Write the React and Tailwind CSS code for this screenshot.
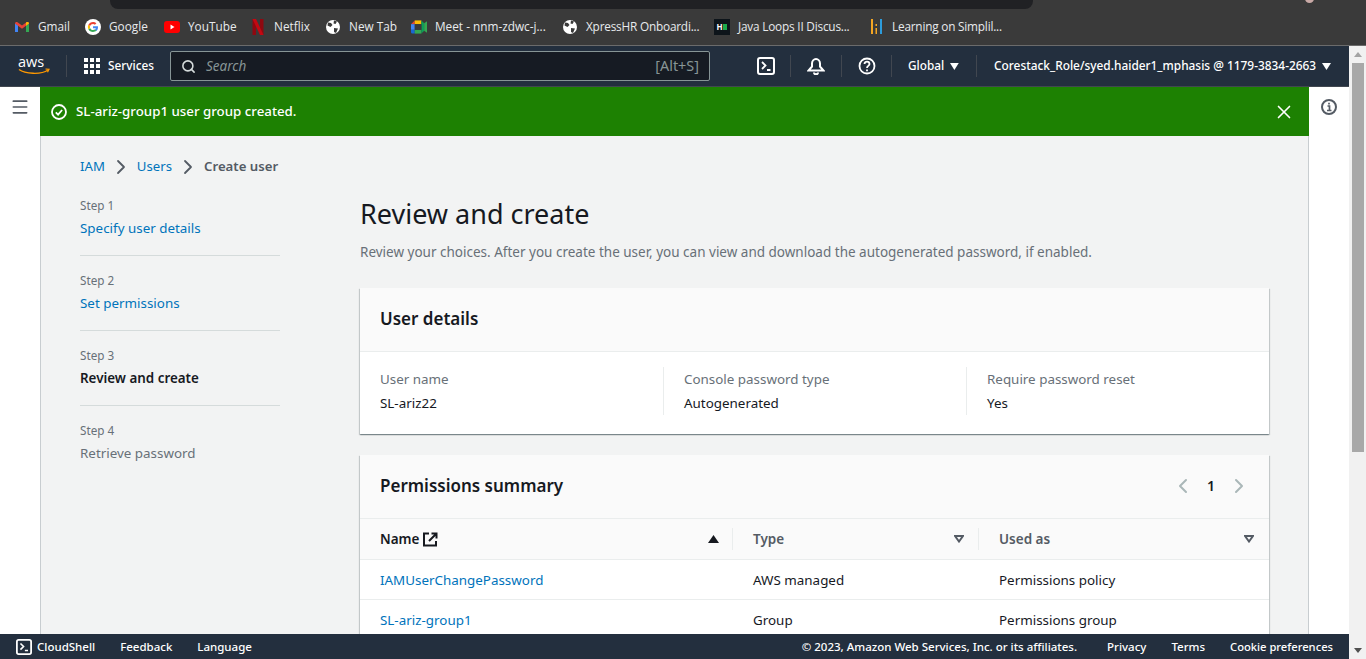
import React from "react";
import { X, Menu, Search, ChevronRight, ChevronLeft } from "lucide-react";

const font = "font-['Noto_Sans','Open_Sans',sans-serif]";

const GlobeIcon = () => (
  <svg width="16" height="16" viewBox="0 0 16 16">
    <circle cx="8" cy="8" r="7" fill="#fff" />
    <path d="M3 3.500l3 .5 1.500 2-2 2-3-1.500zM9 1.500l3 1-1.500 2.500-2-.5zM9 9l4 .5-2 4.500-2-1z" fill="#3a3a3a" />
  </svg>
);

const bookmarks = [
  {
    label: "Gmail",
    w: "w-[71px]",
    icon: (
      <svg width="16" height="16" viewBox="0 0 16 16">
        <path d="M1 13V4l3 2.200V13z" fill="#4285f4" />
        <path d="M12 13V6.200L15 4v9z" fill="#34a853" />
        <path d="M1 4.500C1 3 2.500 2.500 3.500 3.200L8 6.600l4.500-3.400c1-.7 2.500-.2 2.500 1.300L12 6.800 8 9.800 4 6.800z" fill="#ea4335" />
        <path d="M12 6.800l3-2.300C15 3 13.500 2.500 12.500 3.200L12 3.600z" fill="#fbbc04" />
      </svg>
    ),
  },
  {
    label: "Google",
    w: "w-[79px]",
    icon: (
      <svg width="16" height="16" viewBox="0 0 16 16">
        <circle cx="8" cy="8" r="8" fill="#fff" />
        <path d="M13 8.200c0-.4 0-.7-.1-1H8v2h2.800c-.1.7-.5 1.200-1 1.600l1.600 1.200C12.400 11.100 13 9.800 13 8.200z" fill="#4285f4" />
        <path d="M8 13c1.400 0 2.500-.5 3.400-1.200l-1.600-1.200c-.5.300-1 .5-1.800.5-1.300 0-2.500-.9-2.900-2.100L3.400 10.200C4.200 11.900 6 13 8 13z" fill="#34a853" />
        <path d="M5.100 9c-.2-.6-.2-1.400 0-2L3.400 5.800c-.7 1.400-.7 3 0 4.400z" fill="#fbbc04" />
        <path d="M8 4.900c.8 0 1.400.3 1.900.8l1.500-1.500C10.500 3.500 9.300 3 8 3 6 3 4.200 4.100 3.400 5.800L5.100 7C5.500 5.800 6.700 4.900 8 4.900z" fill="#ea4335" />
      </svg>
    ),
  },
  {
    label: "YouTube",
    w: "w-[86px]",
    icon: (
      <svg width="16" height="12" viewBox="0 0 16 12">
        <rect width="16" height="12" rx="3" fill="#f00" />
        <path d="M6.500 3.500v5l4-2.500z" fill="#fff" />
      </svg>
    ),
  },
  {
    label: "Netflix",
    w: "w-[75px]",
    icon: (
      <svg width="16" height="16" viewBox="0 0 16 16">
        <path d="M2.500 0h3.500v16l-3.500 0z" fill="#8f0810" />
        <path d="M10 0h3.500v16H10z" fill="#8f0810" />
        <path d="M2.500 0H6l7.500 16H10z" fill="#c40812" />
      </svg>
    ),
  },
  { label: "New Tab", w: "w-[86px]", icon: <GlobeIcon /> },
  {
    label: "Meet - nnm-zdwc-j...",
    w: "w-[152px]",
    icon: (
      <svg width="17" height="14" viewBox="0 0 17 14">
        <path d="M0 4l4-4v4z" fill="#ea4335" />
        <path d="M4 0h7v4H4z" fill="#fbbc04" />
        <path d="M0 4h4v6H0z" fill="#4285f4" />
        <path d="M0 10h4v4H1.500A1.500 1.500 0 0 1 0 12.500z" fill="#1967d2" />
        <path d="M4 10h7v4H4z" fill="#34a853" />
        <path d="M11 0v14l3-3V3z" fill="#0f9d58" />
        <path d="M14 3l3-2v12l-3-2z" fill="#34a853" />
        <path d="M4 4h7v6H4z" fill="#3a3a3a" />
      </svg>
    ),
  },
  { label: "XpressHR Onboardi...", w: "w-[152px]", cls: "-ml-px tracking-[-0.2px]", icon: <GlobeIcon /> },
  {
    label: "Java Loops II Discus...",
    w: "w-[154px]",
    cls: "tracking-[-0.2px]",
    icon: (
      <span className="flex h-4 w-4 items-center justify-center gap-px bg-[#0d141a]">
        <span className="text-[8px] leading-none font-bold text-white">H</span>
        <span className="h-[6px] w-[4px] bg-[#1ba94c]"></span>
      </span>
    ),
  },
  {
    label: "Learning on Simplil...",
    w: "",
    cls: "tracking-[-0.2px]",
    icon: (
      <svg width="11" height="16" viewBox="0 0 11 16">
        <rect x="0" y="0" width="2" height="15" fill="#f5a623" />
        <rect x="4.500" y="5" width="1.500" height="2" fill="#f5a623" />
        <rect x="4.500" y="9" width="1.500" height="6" fill="#f5a623" />
        <rect x="9" y="0" width="2" height="15" fill="#2d9cdb" />
      </svg>
    ),
  },
];

const TerminalIcon = ({ size = 18 }) => (
  <svg width={size} height={size} viewBox="0 0 18 18" fill="none" stroke="#fff" strokeWidth="2">
    <rect x="1" y="1" width="16" height="16" rx="2" />
    <path d="M5 5l3.500 3.500L5 12M10 13h3.500" strokeWidth="1.800" />
  </svg>
);

const Divider = () => <span className="block h-[22px] w-px bg-[#414750]"></span>;

const Caret = () => (
  <svg width="9" height="7" viewBox="0 0 9 7" className="ml-[6px]">
    <path d="M0 0h9L4.500 7z" fill="#fff" />
  </svg>
);

const FilterCaret = () => (
  <svg width="10" height="8" viewBox="0 0 10 8" fill="none" stroke="#545b64" strokeWidth="2">
    <path d="M1 1h8L5 6.500z" />
  </svg>
);

const TopNav = () => (
  <div className="flex h-[40px] shrink-0 items-center bg-[#232f3e] text-[11.800px] whitespace-nowrap text-white">
    <svg width="36" height="32" viewBox="0 0 36 32" className="ml-[18px] mr-[12px]">
      <text x="0" y="17" fill="#fff" fontSize="14.500" fontFamily="Open Sans, sans-serif">aws</text>
      <path d="M1 19.500c6 4.500 22 5.500 29 .5" fill="none" stroke="#f90" strokeWidth="1.400" />
      <path d="M27.500 19l3.500.3-1.500 3" fill="none" stroke="#f90" strokeWidth="1.200" />
    </svg>
    <Divider />
    <span className="ml-[17px] grid h-4 w-4 grid-cols-3 gap-[2px]">
      {[...Array(9)].map((_, i) => (
        <span key={i} className="bg-white"></span>
      ))}
    </span>
    <span className="ml-2 w-[54px] font-medium">Services</span>
    <div className="ml-[8px] flex h-[30px] w-[540px] shrink-0 items-center rounded-[2px] border border-[#879596] bg-[#161b23] pl-[10px] pr-[10px]">
      <Search size={15} strokeWidth={2.500} className="text-[#d5dbdb]" />
      <span className="ml-[10px] flex-1 text-[13.500px] italic text-[#879596]">Search</span>
      <span className="text-[14.400px] text-[#879596]">[Alt+S]</span>
    </div>
    <span className="ml-[47px]"><TerminalIcon /></span>
    <span className="ml-[15px] mr-[16px]"><Divider /></span>
    <svg width="18" height="18" viewBox="0 0 18 18" fill="none" stroke="#fff" strokeWidth="2">
      <path d="M1.500 13.500h15L13 9.500V6.500a4 4.500 0 0 0-8 0v3z" />
      <path d="M7 15.500a2 1.800 0 0 0 4 0" />
    </svg>
    <span className="mx-[16px]"><Divider /></span>
    <svg width="18" height="18" viewBox="0 0 18 18" fill="none" stroke="#fff" strokeWidth="1.800">
      <circle cx="9" cy="9" r="7.500" />
      <path d="M6.500 7c0-3.300 5-3.300 5 0 0 2-2.500 1.800-2.500 4" />
      <path d="M9 12.500v1.800" />
    </svg>
    <span className="ml-[15px] mr-[16px]"><Divider /></span>
    <span className="flex w-[51px] items-center font-medium">Global<Caret /></span>
    <span className="ml-[17px] mr-[17px]"><Divider /></span>
    <span className="flex items-center text-[11.880px] font-medium">
      Corestack_Role/syed.haider1_mphasis @ 1179-3834-2663<Caret />
    </span>
  </div>
);

const steps = [
  { step: "Step 1", label: "Specify user details", cls: "font-normal text-[#0073bb]" },
  { step: "Step 2", label: "Set permissions", cls: "font-normal text-[#0073bb]" },
  { step: "Step 3", label: "Review and create", cls: "font-semibold text-[#16191f]" },
  { step: "Step 4", label: "Retrieve password", cls: "font-normal text-[#687078]" },
];

const Stepper = () => (
  <div className="w-[200px] shrink-0 pt-[20px]">
    {steps.map((s, i) => (
      <div
        key={s.step}
        className={`${i === 0 ? "h-[60px]" : "h-[75px] pt-[15px]"} ${i < 3 ? "border-b border-[#d5dbdb]" : ""}`}
      >
        <div className="text-[11.700px] leading-[18px] text-[#687078]">{s.step}</div>
        <div className={`mt-[2px] text-[13.400px] leading-[24px] ${s.cls}`}>{s.label}</div>
      </div>
    ))}
  </div>
);

const Field = ({ label, value, cls }) => (
  <div className={cls}>
    <div className="text-[13.400px] leading-[24px] text-[#687078]">{label}</div>
    <div className="text-[13.400px] leading-[24px] text-[#16191f]">{value}</div>
  </div>
);

const Card = ({ children, cls = "" }) => (
  <div className={`bg-white shadow-[0_1px_1px_0_rgba(0,28,36,0.3),1px_1px_1px_0_rgba(0,28,36,0.15),-1px_1px_1px_0_rgba(0,28,36,0.15)] ${cls}`}>
    {children}
  </div>
);

const UserDetails = () => (
  <Card>
    <div className="flex h-[64px] items-center border-b border-[#eaeded] bg-[#fafafa] pb-[2px] pl-[20px] text-[17px] font-semibold text-[#16191f]">
      User details
    </div>
    <div className="flex h-[82px] pt-[15px]">
      <Field label="User name" value="SL-ariz22" cls="h-[48px] w-[304px] border-r border-[#eaeded] pl-[20px]" />
      <Field label="Console password type" value="Autogenerated" cls="h-[48px] w-[303px] border-r border-[#eaeded] pl-[20px]" />
      <Field label="Require password reset" value="Yes" cls="pl-[20px]" />
    </div>
  </Card>
);

const Header = ({ children, cls }) => (
  <div className={`flex h-[40px] items-center text-[13.500px] font-semibold ${cls}`}>{children}</div>
);

const rows = [
  { name: "IAMUserChangePassword", type: "AWS managed", used: "Permissions policy" },
  { name: "SL-ariz-group1", type: "Group", used: "Permissions group" },
];

const PermissionsSummary = () => (
  <Card cls="mt-[21px]">
    <div className="flex h-[63px] items-center justify-between bg-[#fafafa] pb-[2px] pl-[20px] pr-[18px]">
      <span className="text-[17px] font-semibold text-[#16191f]">Permissions summary</span>
      <div className="flex items-center text-[#aab7b8]">
        <ChevronLeft size={24} strokeWidth={2} />
        <span className="mx-[12px] text-[14px] font-semibold text-[#16191f]">1</span>
        <ChevronRight size={24} strokeWidth={2} />
      </div>
    </div>
    <div className="flex border-y border-[#eaeded] bg-[#fafafa]">
      <Header cls="w-[372px] justify-between pl-[20px] pr-[13px] text-[#16191f]">
        <span className="flex items-center gap-[4px]">
          Name
          <svg width="15" height="15" viewBox="0 0 15 15" fill="none" stroke="#16191f" strokeWidth="2">
            <path d="M6 1.500H1v12h12V9" />
            <path d="M6 9l7-7M8.500 1.500h5v5" />
          </svg>
        </span>
        <svg width="11" height="8" viewBox="0 0 11 8"><path d="M0 8h11L5.500 0z" fill="#16191f" /></svg>
      </Header>
      <div className="my-[9px] w-px bg-[#eaeded]"></div>
      <Header cls="w-[245px] justify-between pl-[20px] pr-[14px] text-[#545b64]">
        Type <FilterCaret />
      </Header>
      <div className="my-[9px] w-px bg-[#eaeded]"></div>
      <Header cls="flex-1 justify-between pl-[20px] pr-[15px] text-[#545b64]">
        Used as <FilterCaret />
      </Header>
    </div>
    {rows.map((r) => (
      <div key={r.name} className="flex h-[40px] items-center border-b border-[#eaeded] pt-[2px] text-[13.400px] text-[#16191f]">
        <span className="w-[393px] pl-[20px] text-[#0073bb]">{r.name}</span>
        <span className="w-[246px]">{r.type}</span>
        <span>{r.used}</span>
      </div>
    ))}
  </Card>
);

const Footer = () => (
  <div className="flex h-[25px] shrink-0 items-center justify-between bg-[#232f3e] pl-[16px] pr-[16px] text-[11.500px] font-medium text-white">
    <div className="flex items-center">
      <TerminalIcon size={16} />
      <span className="ml-[5px]">CloudShell</span>
      <span className="ml-[25px]">Feedback</span>
      <span className="ml-[25px]">Language</span>
    </div>
    <div className="flex items-baseline">
      <span>© 2023, Amazon Web Services, Inc. or its affiliates.</span>
      <span className="ml-[30px]">Privacy</span>
      <span className="ml-[25px]">Terms</span>
      <span className="ml-[25px] text-[11.200px]">Cookie preferences</span>
    </div>
  </div>
);

export default function App() {
  return (
    <div className={`${font} flex h-[659px] flex-col overflow-hidden bg-white`}>
      {/* browser chrome */}
      <div className="relative flex h-[46px] shrink-0 flex-col overflow-hidden border-b border-[#6b6b6b] bg-[#3a3a3a]">
        <div className="ml-[110px] h-[9px] w-[923px] rounded-b-[8px] bg-[#202124]"></div>
        <span className="absolute top-[-6px] left-[1305px] h-[9px] w-[9px] rounded-full bg-[#c9a9a6]"></span>
        <div className="flex items-center pl-[14px] pt-[9px] font-['Open_Sans',sans-serif] text-[11.800px] text-[#e8eaed]">
          {bookmarks.map((b) => (
            <div key={b.label} className={`flex h-[18px] shrink-0 items-center gap-[8px] ${b.w} ${b.cls || ""}`}>
              <span className="flex w-[16px] justify-center">{b.icon}</span>
              <span>{b.label}</span>
            </div>
          ))}
        </div>
      </div>

      <div className="flex min-h-0 flex-1">
        <div className="flex min-w-0 flex-1 flex-col">
          <TopNav />
          <div className="flex min-h-0 flex-1 border-t border-[#414750]">
            <div className="w-[40px] shrink-0 pl-[10px] pt-[10px]">
              <Menu size={20} strokeWidth={2} className="text-[#545b64]" />
            </div>
            <div className="flex min-w-0 flex-1 flex-col border-x border-[#c8cdd0] bg-[#f2f3f3]">
              <div className="-ml-px -mr-px flex h-[49px] shrink-0 items-center bg-[#1d8102] pl-[11px] pr-[14px] text-[13.300px] font-medium text-white">
                <svg width="16" height="16" viewBox="0 0 16 16" fill="none" stroke="#fff" strokeWidth="1.800">
                  <circle cx="8" cy="8" r="7" />
                  <path d="M4.800 8.300l2.300 2.300 4-4.600" />
                </svg>
                <span className="ml-[9px] flex-1">SL-ariz-group1 user group created.</span>
                <X size={22} strokeWidth={1.800} />
              </div>
              <div className="min-h-0 flex-1 overflow-hidden pl-[39px] pr-[39px] pt-[21px]">
                <div className="flex h-[20px] items-center text-[13.200px]">
                  <span className="text-[#0073bb]">IAM</span>
                  <ChevronRight size={24} strokeWidth={1.800} className="mx-[4px] text-[#545b64]" />
                  <span className="text-[#0073bb]">Users</span>
                  <ChevronRight size={24} strokeWidth={1.800} className="mx-[4px] text-[#545b64]" />
                  <span className="font-semibold text-[#545b64]">Create user</span>
                </div>
                <div className="-mt-px flex">
                  <Stepper />
                  <div className="ml-[80px] min-w-0 flex-1 pt-[20px]">
                    <h1 className="text-[27px] leading-[36px] font-normal text-[#16191f]">Review and create</h1>
                    <p className="mt-[10px] text-[13.500px] leading-[20px] text-[#687078]">
                      Review your choices. After you create the user, you can view and download the autogenerated password, if enabled.
                    </p>
                    <div className="mt-[26px]">
                      <UserDetails />
                      <PermissionsSummary />
                    </div>
                  </div>
                </div>
              </div>
            </div>
            <div className="flex w-[40px] shrink-0 justify-center pt-[12px]">
              <svg width="16" height="16" viewBox="0 0 16 16" fill="none" stroke="#545b64" strokeWidth="2">
                <circle cx="8" cy="8" r="7" />
                <path d="M6.500 7h2v4.500M6 11.500h4.500M8 3.800v1.800" strokeWidth="1.700" />
              </svg>
            </div>
          </div>
          <Footer />
        </div>
        {/* page scrollbar */}
        <div className="flex w-[17px] shrink-0 flex-col bg-[#f1f1f1]">
          <div className="flex h-[17px] items-center justify-center">
            <svg width="8" height="5" viewBox="0 0 8 5"><path d="M0 5h8L4 0z" fill="#a3a3a3" /></svg>
          </div>
          <div className="ml-[3px] mr-[2px] h-[389px] bg-[#a8a8a8]"></div>
          <div className="flex flex-1 items-end justify-center pb-[6px]">
            <svg width="8" height="5" viewBox="0 0 8 5"><path d="M0 0h8L4 5z" fill="#505050" /></svg>
          </div>
        </div>
      </div>
    </div>
  );
}
